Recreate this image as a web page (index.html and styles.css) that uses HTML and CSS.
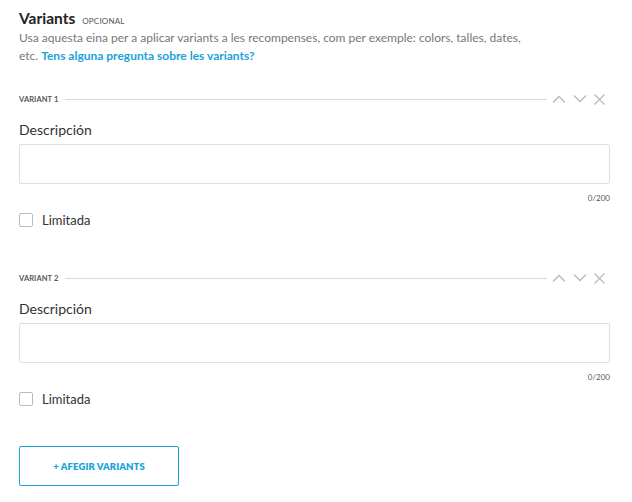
FILE: index.html
```html
<!DOCTYPE html>
<html lang="ca">
<head>
<meta charset="utf-8">
<link rel="stylesheet" href="styles.css">
</head>
<body>
<div class="page">
  <div class="head">
    <h2 class="title">Variants</h2>
    <span class="opt">OPCIONAL</span>
  </div>
  <p class="desc">Usa aquesta eina per a aplicar variants a les recompenses, com per exemple: colors, talles, dates,<br>etc. <a class="link" href="#">Tens alguna pregunta sobre les variants?</a></p>

  <section class="variant">
    <div class="vhead">
      <span class="vlabel">VARIANT 1</span>
      <span class="vline"></span>
      <div class="vicons">
        <svg width="14" height="8" viewBox="0 0 14 8"><path d="M1 7.5L7 1.5L13 7.5" fill="none" stroke="#b9b9b9" stroke-width="1.3"/></svg>
        <svg width="14" height="8" viewBox="0 0 14 8"><path d="M1 0.5L7 6.5L13 0.5" fill="none" stroke="#b9b9b9" stroke-width="1.3"/></svg>
        <svg width="11" height="11" viewBox="0 0 11 11"><path d="M0.5 0.5L10.5 10.5M10.5 0.5L0.5 10.5" fill="none" stroke="#b9b9b9" stroke-width="1.2"/></svg>
      </div>
    </div>
    <label class="flabel">Descripción</label>
    <div class="input"></div>
    <div class="count">0/200</div>
    <div class="check"><span class="box"></span><span class="clabel">Limitada</span></div>
  </section>

  <section class="variant">
    <div class="vhead">
      <span class="vlabel">VARIANT 2</span>
      <span class="vline"></span>
      <div class="vicons">
        <svg width="14" height="8" viewBox="0 0 14 8"><path d="M1 7.5L7 1.5L13 7.5" fill="none" stroke="#b9b9b9" stroke-width="1.3"/></svg>
        <svg width="14" height="8" viewBox="0 0 14 8"><path d="M1 0.5L7 6.5L13 0.5" fill="none" stroke="#b9b9b9" stroke-width="1.3"/></svg>
        <svg width="11" height="11" viewBox="0 0 11 11"><path d="M0.5 0.5L10.5 10.5M10.5 0.5L0.5 10.5" fill="none" stroke="#b9b9b9" stroke-width="1.2"/></svg>
      </div>
    </div>
    <label class="flabel">Descripción</label>
    <div class="input"></div>
    <div class="count">0/200</div>
    <div class="check"><span class="box"></span><span class="clabel">Limitada</span></div>
  </section>

  <button class="add">+ AFEGIR VARIANTS</button>
</div>
</body>
</html>
```
FILE: styles.css
```css
* { box-sizing: border-box; }
html, body { margin: 0; padding: 0; background: #fff; }
body { font-family: Lato, "Noto Sans", sans-serif; color: #222; }
.page { padding: 9px 22px 0 19px; width: 632px; }
.head { display: flex; align-items: baseline; gap: 7px; height: 18px; }
.title { margin: 0; font-size: 15.5px; font-weight: 700; color: #222; line-height: 18px; }
.opt { font-size: 8px; color: #555; letter-spacing: 0.2px; }
.desc { margin: 2px 0 0; font-size: 12px; line-height: 18px; color: #777; }
.link { color: #1aa3d8; font-weight: 700; text-decoration: none; }
.variant { margin-top: 27px; }
.variant + .variant { margin-top: 43px; }
.vhead { display: flex; align-items: center; height: 14px; }
.vlabel { font-size: 7.5px; color: #555; font-weight: 700; letter-spacing: 0.1px; }
.vline { flex: 1; height: 1px; background: #ddd9cd; margin: 0 5px 0 7px; }
.vicons { display: flex; align-items: center; gap: 7px; width: 58px; padding-right: 5px; }
.flabel { display: block; margin-top: 15px; font-size: 14px; line-height: 18px; color: #333; }
.input { margin-top: 5px; height: 40px; border: 1px solid #e3dfd2; border-radius: 2px; }
.count { text-align: right; font-size: 8px; color: #555; margin-top: 9px; line-height: 10px; }
.check { display: flex; align-items: center; gap: 9px; margin-top: 9px; }
.box { width: 14px; height: 14px; border: 1px solid #bbb; border-radius: 2px; }
.clabel { font-size: 13px; color: #333; line-height: 16px; }
.add { margin-top: 39px; width: 160px; height: 40px; background: #fff; border: 1.5px solid #1aa3d8; border-radius: 2px; color: #1aa3d8; font-family: Lato, sans-serif; font-weight: 800; font-size: 9.5px; letter-spacing: 0.1px; }
```
